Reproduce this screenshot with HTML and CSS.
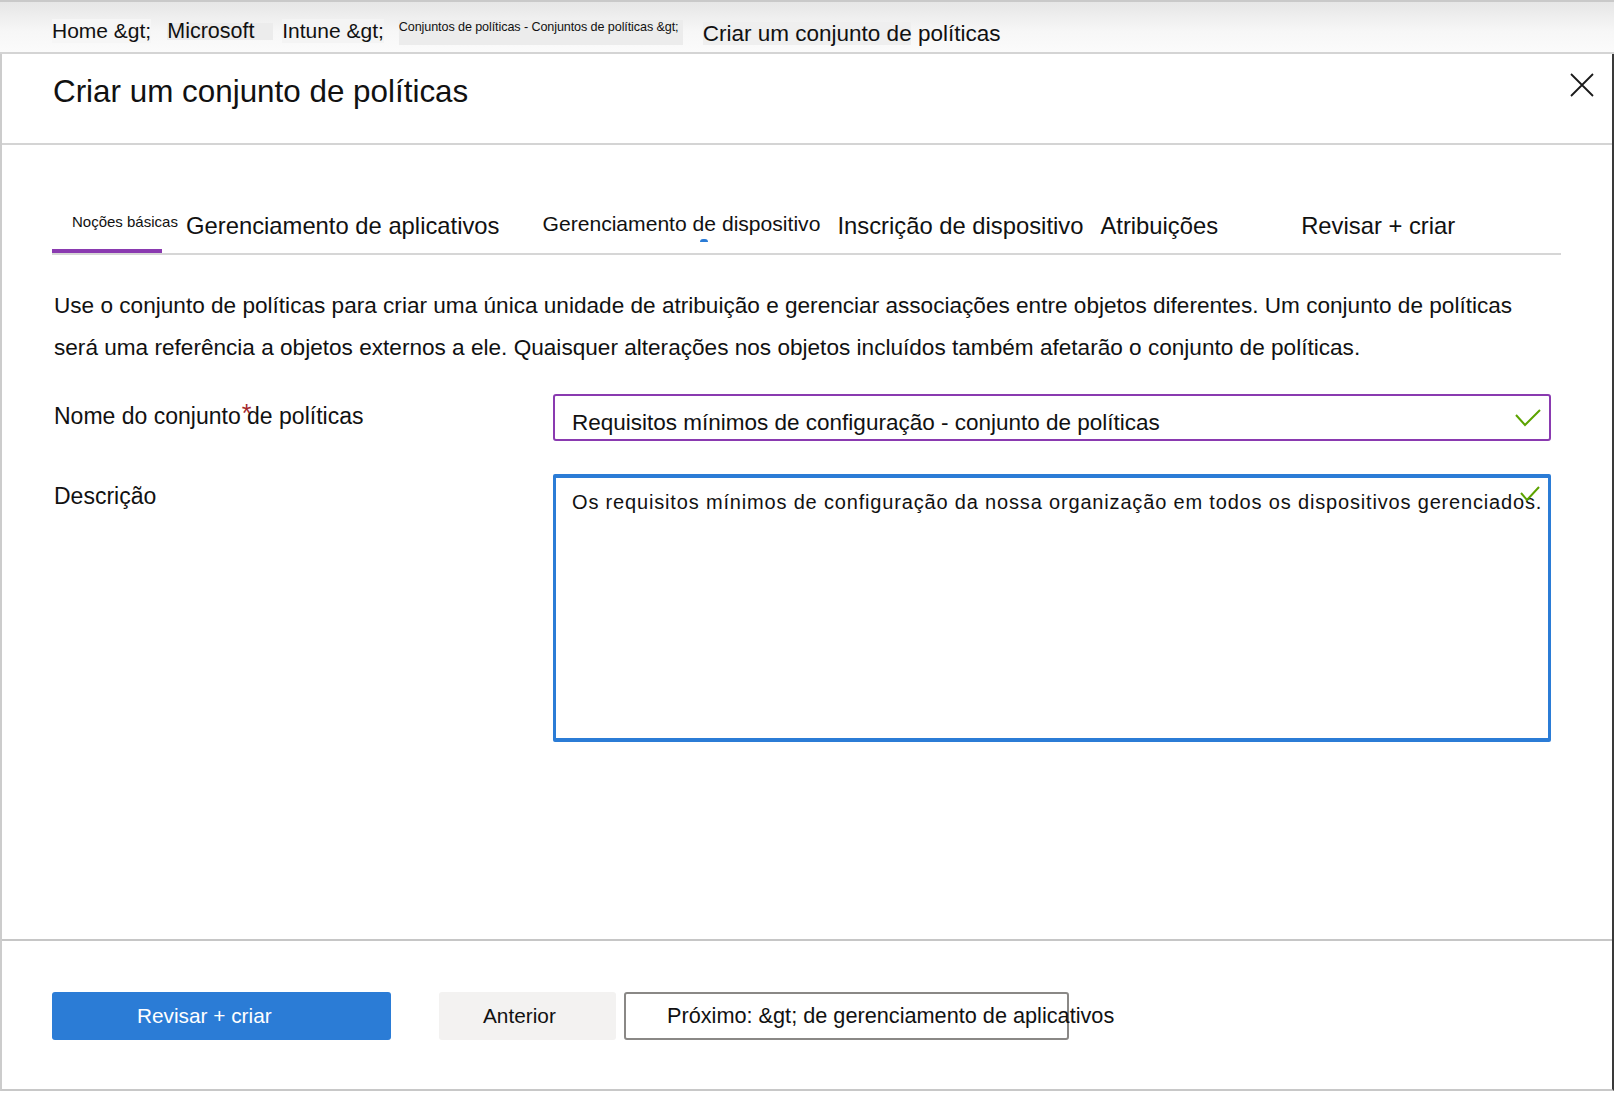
FILE: index.html
```html
<!DOCTYPE html>
<html lang="pt-BR">
<head>
<meta charset="utf-8">
<title>Criar um conjunto de políticas</title>
<link rel="stylesheet" href="styles.css">
</head>
<body>
<div class="page">
  <nav class="crumbs">
    <span class="crumb crumb-home">Home &amp;gt;</span>
    <span class="crumb crumb-ms">Microsoft</span>
    <span class="crumb crumb-intune">Intune &amp;gt;</span>
    <span class="crumb crumb-small">Conjuntos de políticas - Conjuntos de políticas &amp;gt;</span>
    <span class="crumb crumb-current">Criar um conjunto de políticas</span>
  </nav>
  <section class="panel">
    <header class="panel-head">
      <h1 class="panel-title">Criar um conjunto de políticas</h1>
      <button class="close" type="button" aria-label="Fechar">
        <svg width="24" height="24" viewBox="0 0 24 24"><path d="M1 1 L23 23 M23 1 L1 23" stroke="#1a1a1a" stroke-width="1.8" fill="none"/></svg>
      </button>
    </header>
    <div class="panel-body">
      <div class="tabs">
        <div class="tab tab-active">Noções básicas</div>
        <div class="tab tab-big tab-apps">Gerenciamento de aplicativos</div>
        <div class="tab tab-mid tab-device">Gerenciamento de dispositivo</div>
        <div class="tab tab-big tab-enroll">Inscrição de dispositivo</div>
        <div class="tab tab-big tab-assign">Atribuições</div>
        <div class="tab tab-big tab-review">Revisar + criar</div>
      </div>
      <p class="intro">Use o conjunto de políticas para criar uma única unidade de atribuição e gerenciar associações entre objetos diferentes. Um conjunto de políticas<br>será uma referência a objetos externos a ele. Quaisquer alterações nos objetos incluídos também afetarão o conjunto de políticas.</p>
      <div class="form">
        <label class="label label-name">Nome do conjunto<span class="req">*</span> de políticas</label>
        <div class="input input-name">
          <span class="input-text">Requisitos mínimos de configuração - conjunto de políticas</span>
          <svg class="check" width="26" height="20" viewBox="0 0 26 20"><path d="M1 7 L10 17 L25 2" stroke="#5ca300" stroke-width="2" fill="none"/></svg>
        </div>
        <label class="label label-desc">Descrição</label>
        <div class="textarea">
          <span class="textarea-text">Os requisitos mínimos de configuração da nossa organização em todos os dispositivos gerenciados.</span>
          <svg class="check check-over" width="20" height="16" viewBox="0 0 20 16"><path d="M1 7 L7 14 L19 1" stroke="#5ca300" stroke-width="2" fill="none"/></svg>
        </div>
      </div>
    </div>
    <footer class="panel-foot">
      <button class="btn btn-primary" type="button">Revisar + criar</button>
      <button class="btn btn-secondary" type="button">Anterior</button>
      <button class="btn btn-outline" type="button">Próximo: &amp;gt; de gerenciamento de aplicativos</button>
    </footer>
  </section>
</div>
</body>
</html>
```
FILE: styles.css
```css
* { box-sizing: border-box; }
html, body { margin: 0; padding: 0; background: #ffffff; }
body {
  font-family: "Liberation Sans", Arial, sans-serif;
  color: #111111;
  width: 1614px;
  height: 1093px;
  overflow: hidden;
}
.page { width: 1614px; }

/* Breadcrumbs */
.crumbs {
  height: 54px;
  border-top: 2px solid #c9c9c9;
  border-bottom: 2px solid #d4d4d4;
  background: linear-gradient(#e6e6e6, #f7f7f7 60%, #fbfbfb);
  display: flex;
  align-items: flex-start;
  padding: 17px 0 0 52px;
  white-space: nowrap;
}
.crumb { font-size: 21px; line-height: 24px; color: #111; }
.crumb-home { background: #f6f6f6; }
.crumb-ms {
  margin-left: 16px;
  margin-top: 4px;
  width: 106px;
  line-height: 17px;
  background: #ececec;
  font-size: 21.5px;
}
.crumb-intune { margin-left: 9px; background: #f4f4f4; }
.crumb-small {
  margin-left: 15px;
  margin-top: 1px;
  width: 284px;
  height: 25px;
  background: #ececec;
  font-size: 12.6px;
  line-height: 14px;
  letter-spacing: -0.1px;
}
.crumb-current {
  margin-left: 20px;
  margin-top: 3px;
  font-size: 22.5px;
  line-height: 23px;
  background: linear-gradient(90deg, #efefef 0, #efefef 208px, transparent 208px);
}

/* Panel */
.panel {
  border-left: 2px solid #cccccc;
  border-right: 2px solid #3a3a3a;
  border-bottom: 2px solid #c8c8c8;
  height: 1037px;
  display: flex;
  flex-direction: column;
}
.panel-head {
  height: 91px;
  flex: none;
  border-bottom: 2px solid #d4d4d4;
  display: flex;
  justify-content: space-between;
  align-items: flex-start;
  padding: 0 18px 0 51px;
}
.panel-title {
  margin: 19px 0 0;
  font-weight: normal;
  font-size: 31.4px;
  line-height: 38px;
  color: #111;
}
.close {
  margin-top: 19px;
  width: 24px;
  height: 24px;
  padding: 0;
  border: 0;
  background: transparent;
  display: block;
}
.close svg { display: block; }

.panel-body { flex: 1; }

/* Tabs */
.tabs {
  margin: 0 51px 0 50px;
  height: 110px;
  border-bottom: 2px solid #d6d6d6;
  display: flex;
  align-items: flex-end;
  white-space: nowrap;
}
.tab { color: #111; }
.tab-active {
  width: 110px;
  padding-left: 20px;
  padding-bottom: 18px;
  border-bottom: 4px solid #8a3ab0;
  font-size: 15px;
  line-height: 18px;
}
.tab-big {
  font-size: 23.8px;
  line-height: 28px;
  padding-bottom: 13px;
}
.tab-mid {
  font-size: 21.1px;
  line-height: 26px;
  padding-bottom: 16px;
  position: relative;
}
.tab-mid::after {
  content: "";
  position: absolute;
  left: 157px;
  bottom: 11px;
  width: 8px;
  height: 3px;
  border-radius: 4px 4px 0 0;
  background: #2b7cd6;
}
.tab-apps { margin-left: 24px; }
.tab-device { margin-left: 43px; }
.tab-enroll { margin-left: 17px; }
.tab-assign { margin-left: 17px; }
.tab-review { margin-left: 83px; }

/* Intro */
.intro {
  margin: 30px 0 0 52px;
  font-size: 22.6px;
  line-height: 42px;
  color: #111;
  white-space: nowrap;
}

/* Form */
.form {
  margin: 25px 61px 0 52px;
  display: grid;
  grid-template-columns: 499px minmax(0, 1fr);
  row-gap: 33px;
}
.label {
  font-size: 23px;
  line-height: 28px;
  color: #111;
}
.label-name { padding-top: 7px; }
.label-desc { padding-top: 8px; }
.req {
  display: inline-block;
  width: 0;
  color: #a4262c;
  font-size: 25px;
  position: relative;
  top: -2px;
  left: 1px;
}
.input {
  height: 47px;
  border: 2px solid #8a3ab0;
  border-radius: 3px;
  display: flex;
  align-items: center;
  justify-content: space-between;
  padding: 10px 8px 0 17px;
}
.input-text {
  font-size: 22.5px;
  line-height: 26px;
  white-space: nowrap;
  color: #111;
}
.check { display: block; margin-top: -9px; flex: none; }
.textarea {
  position: relative;
  height: 268px;
  border: 3px solid #2b7cd6;
  border-top-width: 4px;
  border-bottom-width: 4px;
  border-radius: 2px;
  padding: 12px 10px 0 16px;
}
.textarea-text {
  font-size: 20px;
  line-height: 24px;
  letter-spacing: 0.83px;
  white-space: nowrap;
  color: #111;
}
.check-over {
  position: absolute;
  right: 8px;
  top: 17px;
}

/* Footer */
.panel-foot {
  height: 150px;
  flex: none;
  border-top: 2px solid #c6c6c6;
  display: flex;
  align-items: flex-start;
  padding: 51px 0 0 50px;
}
.btn {
  height: 48px;
  font-family: "Liberation Sans", Arial, sans-serif;
  font-size: 20.8px;
  color: #111;
  border-radius: 3px;
  border: 0;
  padding: 0;
  white-space: nowrap;
  text-align: left;
}
.btn-primary {
  width: 339px;
  padding-left: 85px;
  background: #2b7cd6;
  color: #ffffff;
}
.btn-secondary {
  width: 177px;
  margin-left: 48px;
  padding-left: 44px;
  background: #f3f2f1;
}
.btn-outline {
  width: 445px;
  margin-left: 8px;
  background: #ffffff;
  border: 2px solid #8a8886;
  padding-left: 41px;
  font-size: 21.7px;
  overflow: visible;
}
```
